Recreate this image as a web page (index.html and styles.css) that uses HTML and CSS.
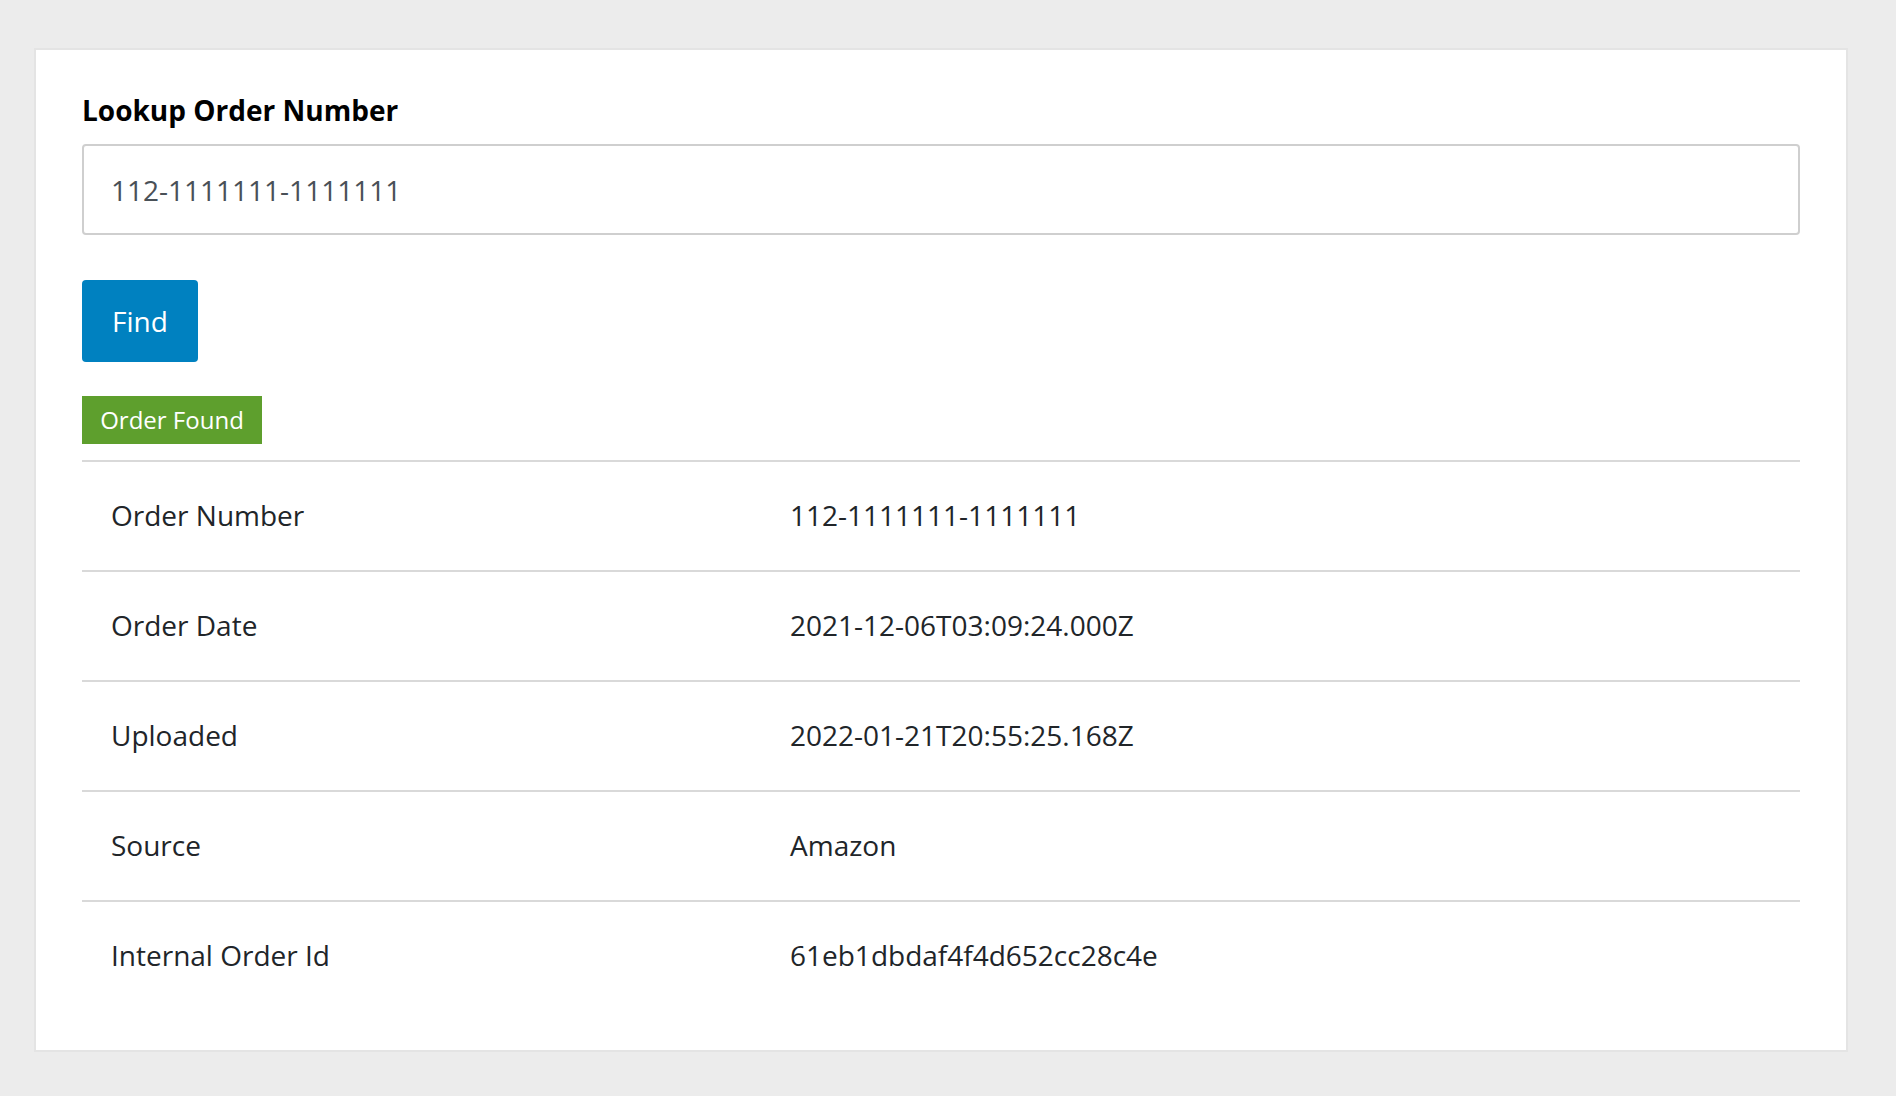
FILE: index.html
```html
<!DOCTYPE html>
<html lang="en">
<head>
<meta charset="utf-8">
<title>Lookup Order Number</title>
<link rel="stylesheet" href="styles.css">
</head>
<body>
<main class="card">
  <label class="title" for="order">Lookup Order Number</label>
  <input class="field" id="order" type="text" value="112-1111111-1111111">
  <button class="find" type="button">Find</button>
  <div class="badge">Order Found</div>
  <table class="details">
    <tbody>
      <tr><td class="key">Order Number</td><td>112-1111111-1111111</td></tr>
      <tr><td class="key">Order Date</td><td>2021-12-06T03:09:24.000Z</td></tr>
      <tr><td class="key">Uploaded</td><td>2022-01-21T20:55:25.168Z</td></tr>
      <tr><td class="key">Source</td><td>Amazon</td></tr>
      <tr><td class="key">Internal Order Id</td><td>61eb1dbdaf4f4d652cc28c4e</td></tr>
    </tbody>
  </table>
</main>
</body>
</html>
```

FILE: styles.css
```css
html, body {
  margin: 0;
  padding: 0;
}
html {
  background: #ececec;
}
body {
  background: #ececec;
  padding: 48px 48px 36px 34px;
  font-family: "Open Sans", "Noto Sans", sans-serif;
  color: #212529;
}
.card {
  background: #fff;
  border: 2px solid #e4e4e4;
  padding: 40px 46px 40px 46px;
  display: flex;
  flex-direction: column;
  align-items: flex-start;
}
.title {
  font-weight: 700;
  font-size: 28px;
  line-height: 40px;
  color: #000;
  margin-bottom: 14px;
}
.field {
  box-sizing: border-box;
  width: 100%;
  height: 91px;
  border: 2px solid #cfcfcf;
  border-radius: 4px;
  padding: 0 27px;
  font-family: "Open Sans", "Noto Sans", sans-serif;
  font-size: 28px;
  color: #495057;
  background: #fff;
  outline: none;
}
.find {
  margin-top: 45px;
  width: 116px;
  height: 82px;
  border: none;
  border-radius: 4px;
  background: #0081c0;
  color: #fff;
  font-family: "Open Sans", "Noto Sans", sans-serif;
  font-size: 28px;
  padding: 0;
}
.badge {
  margin-top: 34px;
  height: 48px;
  width: 180px;
  background: #5e9f2d;
  color: #fff;
  font-size: 24px;
  line-height: 48px;
  text-align: center;
}
.details {
  margin-top: 16px;
  width: 100%;
  border-collapse: collapse;
  font-size: 28px;
}
.details td {
  border-top: 2px solid #d9d9d9;
  padding: 32px 29px 34px;
  height: 42px;
  line-height: 42px;
  color: #212529;
}
.details td.key {
  width: 621px;
}
```
